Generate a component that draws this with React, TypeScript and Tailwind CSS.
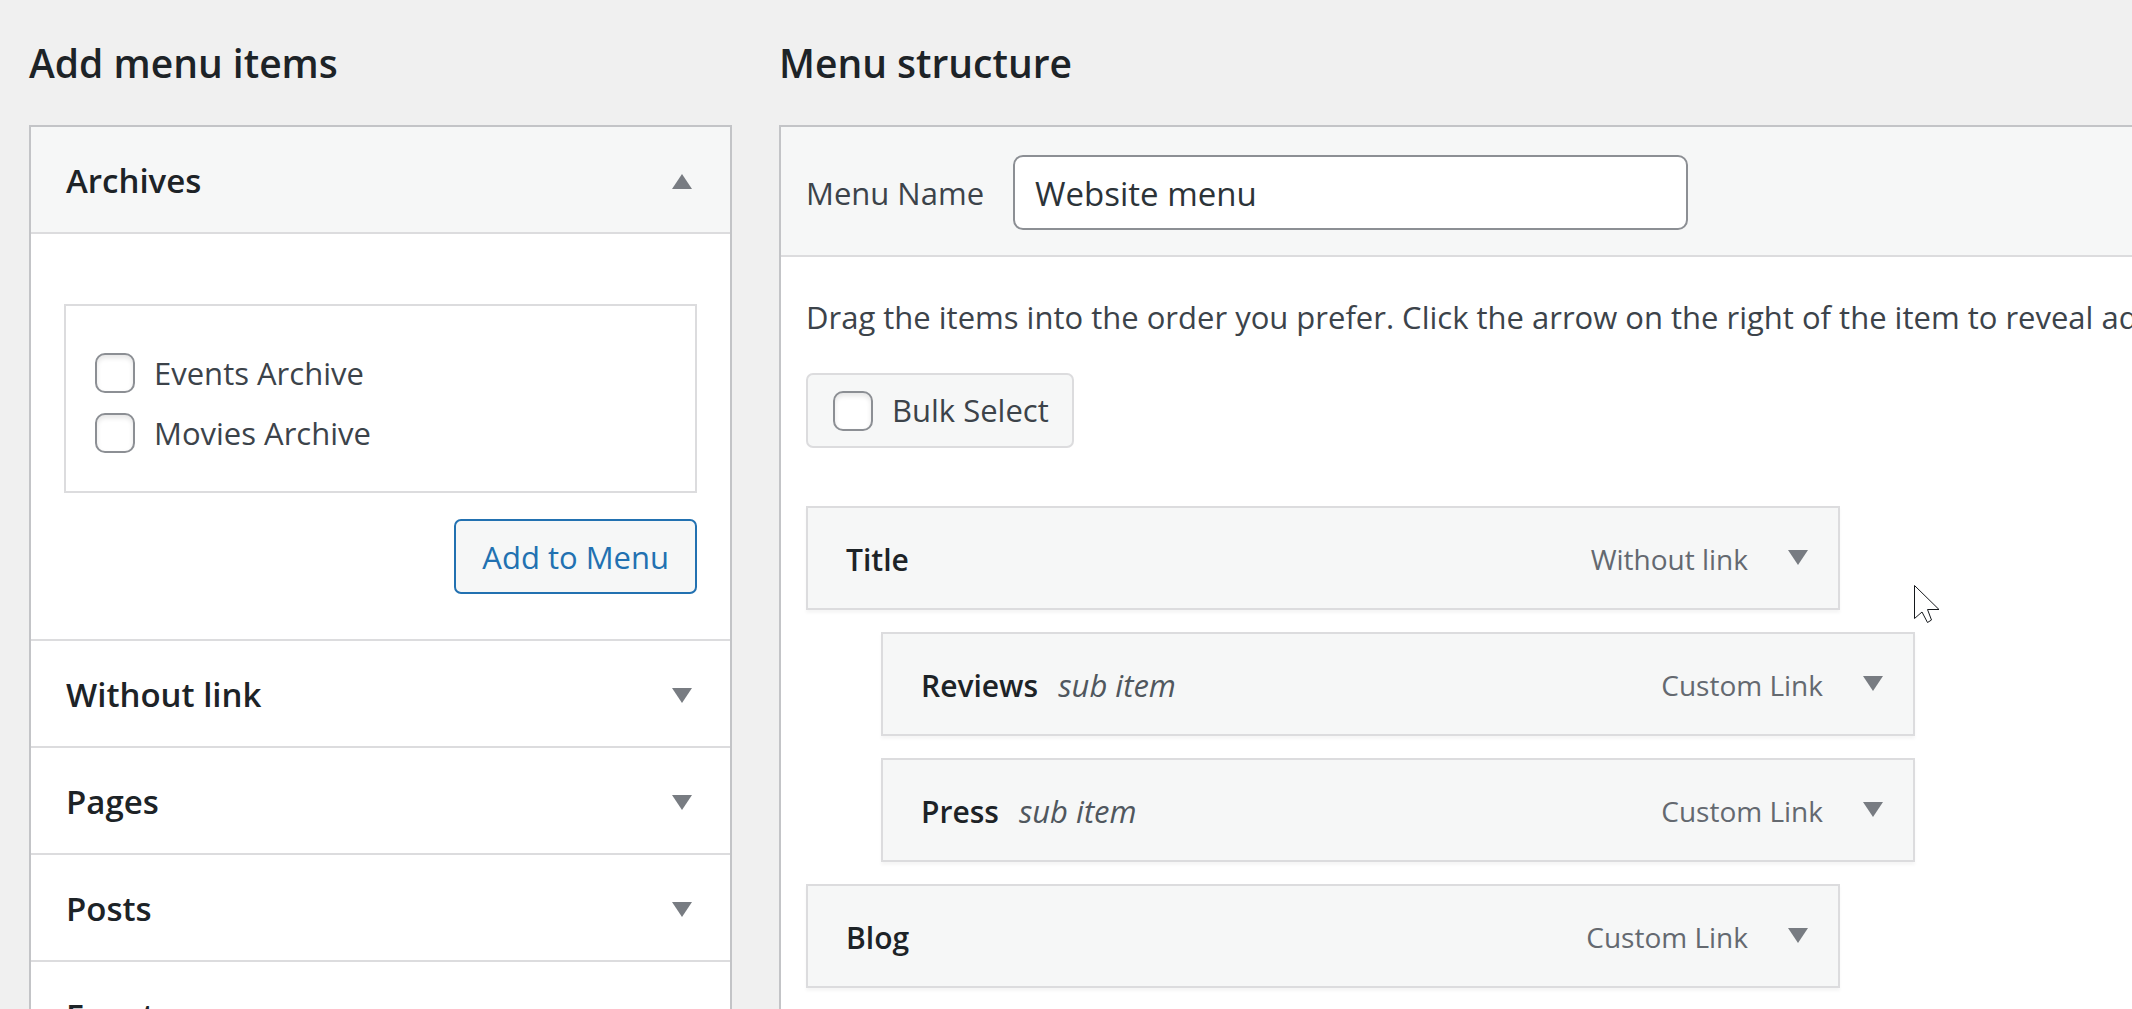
import { useState } from "react";

type Section = { id: string; title: string };
type MenuItem = { title: string; kind: string; sub?: boolean };

const archives = ["Events Archive", "Movies Archive"];

const sections: Section[] = [
  { id: "without-link", title: "Without link" },
  { id: "pages", title: "Pages" },
  { id: "posts", title: "Posts" },
  { id: "events", title: "Events" },
];

const menuItems: MenuItem[] = [
  { title: "Title", kind: "Without link" },
  { title: "Reviews", kind: "Custom Link", sub: true },
  { title: "Press", kind: "Custom Link", sub: true },
  { title: "Blog", kind: "Custom Link" },
];

function Triangle({ up = false }: { up?: boolean }) {
  return (
    <svg width="20" height="15" viewBox="0 0 20 15" fill="#787c82" className="shrink-0" aria-hidden="true">
      <path d={up ? "M0 15h20L10 0z" : "M0 0h20L10 15z"} />
    </svg>
  );
}

function Pointer() {
  return (
    <svg
      width="27"
      height="39"
      viewBox="0 0 27 39"
      className="pointer-events-none absolute left-[1108px] top-[79px]"
      aria-hidden="true"
    >
      <path
        d="M.5 .5 25 24.5H13.5L17.5 35 13.5 37.5 8 27 .5 33.5z"
        fill="#fff"
        stroke="#15181c"
        strokeWidth="1"
      />
    </svg>
  );
}

function CheckBox({ id }: { id: string }) {
  return (
    <input
      id={id}
      type="checkbox"
      className="size-10 shrink-0 appearance-none rounded-[10px] border-2 border-[#8c8f94] bg-white shadow-[inset_0_3px_5px_rgba(0,0,0,0.1)] checked:bg-[#3582c4]"
    />
  );
}

function SectionHeader({ title, open = false }: { title: string; open?: boolean }) {
  return (
    <h3 className={open ? "border-b-2 border-[#dcdcde] bg-[#f6f7f7]" : "border-t-2 border-[#dcdcde] bg-white"}>
      <button
        type="button"
        aria-expanded={open}
        className="flex h-[105px] w-full items-center justify-between pl-[35px] pr-[38px] pt-[3px] text-left text-[33px] font-semibold text-[#1d2327]"
      >
        {title}
        <Triangle up={open} />
      </button>
    </h3>
  );
}

function MenuRow({ item }: { item: MenuItem }) {
  return (
    <li className={item.sub ? "ml-[75px]" : ""}>
      <div className="flex h-[104px] w-[1034px] items-center border-2 border-[#dcdcde] bg-[#f6f7f7] pl-[38px] pr-[30px] pt-[2px] shadow-[0_3px_3px_rgba(0,0,0,0.04)]">
        <span className="text-[30px] font-semibold text-[#1d2327]">{item.title}</span>
        {item.sub && <i className="ml-5 text-[31px] text-[#50575e]">sub item</i>}
        <span className="ml-auto mr-10 text-[28px] text-[#646970]">{item.kind}</span>
        <button type="button" aria-label={`Edit ${item.title}`} className="pb-1">
          <Triangle />
        </button>
      </div>
    </li>
  );
}

export default function App() {
  const [name, setName] = useState("Website menu");

  return (
    <div className="flex h-screen gap-[47px] overflow-hidden bg-[#f0f0f0] pl-[29px] pt-10 font-['Open_Sans','Noto_Sans',sans-serif] text-[31px] text-[#3c434a]">
      <section className="w-[703px] shrink-0">
        <h2 className="mb-[39px] text-[39px] font-semibold leading-[46px] text-[#1d2327]">Add menu items</h2>
        <div className="border-2 border-[#c3c4c7] bg-white">
          <SectionHeader title="Archives" open />
          <div className="flex flex-col px-[33px] pb-[45px] pt-[70px]">
            <ul className="border-2 border-[#dcdcde] pb-7 pl-[29px] pt-[37px]">
              {archives.map((label) => (
                <li key={label} className="flex h-[60px] items-center gap-[19px]">
                  <CheckBox id={label} />
                  <label htmlFor={label}>{label}</label>
                </li>
              ))}
            </ul>
            <button
              type="button"
              className="mt-[26px] h-[75px] self-end rounded-[7px] border-2 border-[#2271b1] bg-[#f6f7f7] px-[26px] pt-[2px] text-[#2271b1]"
            >
              Add to Menu
            </button>
          </div>
          {sections.map((s) => (
            <SectionHeader key={s.id} title={s.title} />
          ))}
        </div>
      </section>

      <section className="flex min-w-0 flex-1 flex-col">
        <h2 className="mb-[39px] text-[39px] font-semibold leading-[46px] text-[#1d2327]">Menu structure</h2>
        <div className="flex-1 border-l-2 border-t-2 border-[#c3c4c7] bg-white">
          <div className="flex items-center gap-[29px] border-b-2 border-[#dcdcde] bg-[#f6f7f7] pb-[25px] pl-[25px] pt-7">
            <label htmlFor="menu-name" className="pt-[2px]">
              Menu Name
            </label>
            <input
              id="menu-name"
              type="text"
              value={name}
              onChange={(e) => setName(e.target.value)}
              className="h-[75px] w-[675px] rounded-[10px] border-2 border-[#8c8f94] bg-white px-5 pt-[2px] text-[33px] text-[#2c3338]"
            />
          </div>
          <div className="pl-[25px] pt-[37px]">
            <p className="mb-[33px] overflow-hidden whitespace-nowrap leading-[46px]">
              Drag the items into the order you prefer. Click the arrow on the right of the item to reveal additional
              configuration options.
            </p>
            <div className="mb-[58px] flex h-[75px] w-fit items-center gap-[19px] rounded-[7px] border-2 border-[#dcdcde] bg-[#f6f7f7] pl-[25px] pr-[23px]">
              <CheckBox id="bulk-select" />
              <label htmlFor="bulk-select">Bulk Select</label>
            </div>
            <ul className="relative flex flex-col gap-[22px]">
              {menuItems.map((item) => (
                <MenuRow key={item.title} item={item} />
              ))}
              <li aria-hidden="true" className="absolute left-0 top-0">
                <Pointer />
              </li>
            </ul>
          </div>
        </div>
      </section>
    </div>
  );
}
